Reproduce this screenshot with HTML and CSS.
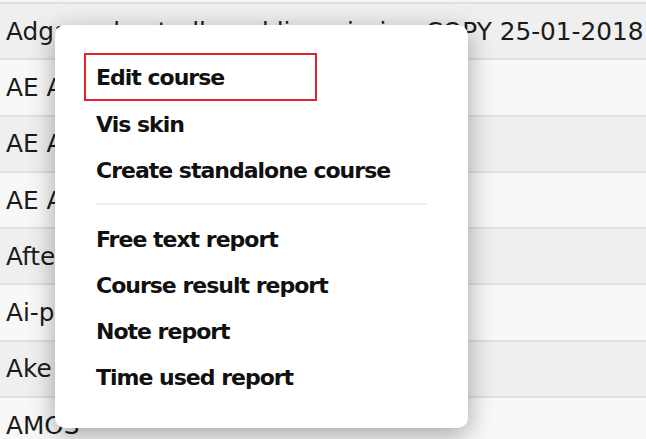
FILE: index.html
```html
<!DOCTYPE html>
<html>
<head>
<meta charset="utf-8">
<link rel="stylesheet" href="styles.css">
</head>
<body>
<div class="list">
  <div class="top-strip"></div>
  <div class="row odd">Adgangskontroll med lisensiering COPY 25-01-2018</div>
  <div class="row even">AE Auditor</div>
  <div class="row odd">AE Arbeidsmiljø</div>
  <div class="row even">AE Avansert</div>
  <div class="row odd">Aftenkurs</div>
  <div class="row even">Ai-prosjekt</div>
  <div class="row odd">Ake kurs</div>
  <div class="row even">AMOS</div>
</div>
<div class="menu">
  <div class="item highlight">Edit course</div>
  <div class="item">Vis skin</div>
  <div class="item">Create standalone course</div>
  <div class="sep"></div>
  <div class="item">Free text report</div>
  <div class="item">Course result report</div>
  <div class="item">Note report</div>
  <div class="item">Time used report</div>
</div>
</body>
</html>
```

FILE: styles.css
```css
html, body {
  margin: 0;
  padding: 0;
  background: #f9f9f9;
  overflow: hidden;
}
body {
  width: 646px;
  height: 439px;
  position: relative;
}
.list {
  display: flex;
  flex-direction: column;
}
.top-strip {
  height: 2px;
  background: #f5f5f5;
}
.row {
  height: 54.3px;
  border-top: 2px solid #e0e0e0;
  font-family: "DejaVu Sans", sans-serif;
  font-size: 24.75px;
  color: #1a1a1a;
  padding-left: 6px;
  display: flex;
  align-items: center;
  white-space: nowrap;
  flex: none;
}
.odd { background: #efefef; }
.even { background: #f8f8f8; }

.menu {
  position: absolute;
  left: 55px;
  top: 25px;
  width: 413px;
  box-sizing: border-box;
  padding: 28px 29px;
  background: #ffffff;
  border-radius: 10px;
  box-shadow: 0 7px 26px rgba(0, 0, 0, 0.34);
  display: flex;
  flex-direction: column;
}
.item {
  height: 46px;
  line-height: 47px;
  padding-left: 12px;
  font-family: "DejaVu Sans", Verdana, sans-serif;
  font-weight: bold;
  font-size: 22px;
  letter-spacing: -1px;
  color: #111111;
  white-space: nowrap;
}
.item.highlight {
  width: 233px;
  height: 48px;
  line-height: 45px;
  box-sizing: border-box;
  border: 2px solid #e3202b;
  padding-left: 10px;
}
.sep {
  height: 2px;
  background: #eeeeee;
  margin: 10px 12px 11px 12px;
}
```
